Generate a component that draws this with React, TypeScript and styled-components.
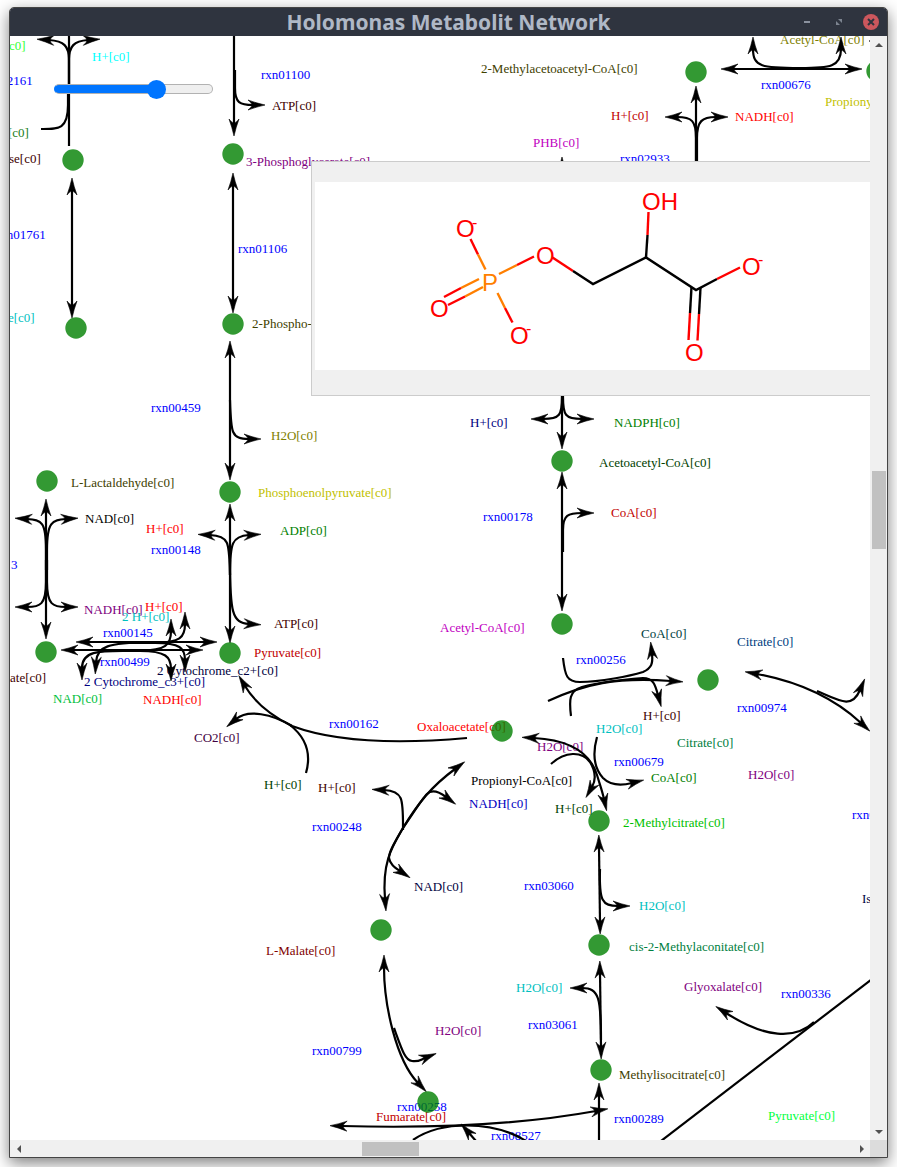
import React, { useState } from "react";
import styled, { createGlobalStyle } from "styled-components";

const GlobalStyle = createGlobalStyle`
  * { box-sizing: border-box; }
  body { margin: 0; background: #fff; overflow: hidden; }
`;

const Desktop = styled.div`
  height: 100vh;
  padding: 7px 9px 9px;
  display: flex;
`;

const Window = styled.main`
  flex: 1;
  min-width: 0;
  display: flex;
  flex-direction: column;
  border: 1px solid #454545;
  border-radius: 5px 5px 0 0;
  background: #f0f0f0;
  box-shadow: 0 5px 16px rgba(0, 0, 0, 0.5);
`;

const TitleBar = styled.header`
  height: 28px;
  flex: none;
  display: grid;
  grid-template-columns: 1fr auto 1fr;
  align-items: center;
  background: #2f343f;
  border-radius: 4px 4px 0 0;
`;

const Title = styled.h1`
  grid-column: 2;
  margin: 0;
  color: #afb8c6;
  font: bold 21px/28px "Noto Sans", "Open Sans", sans-serif;
  white-space: nowrap;
`;

const WindowControls = styled.div`
  display: flex;
  justify-content: flex-end;
  gap: 16px;
  padding-right: 8px;
`;

const ControlButton = styled.button<{ $close?: boolean }>`
  width: 16px;
  height: 16px;
  padding: 0;
  border: 0;
  border-radius: 50%;
  background: ${(p) => (p.$close ? "#cc575d" : "transparent")};
  display: grid;
  place-items: center;
`;

const Body = styled.div`
  flex: 1;
  min-height: 0;
  display: grid;
  grid-template: minmax(0, 1fr) 17px / minmax(0, 1fr) 17px;
`;

const Canvas = styled.section`
  position: relative;
  overflow: hidden;
  background: #fff;
`;

const Network = styled.svg`
  display: block;
  width: 100%;
  height: 100%;
  font: 13px "Liberation Serif", "Times New Roman", serif;
`;

const Zoom = styled.input.attrs({ type: "range" })<{ $fill: number }>`
  position: absolute;
  left: 44px;
  top: 43px;
  width: 159px;
  height: 20px;
  margin: 0;
  appearance: none;
  background: transparent;
  &::-webkit-slider-runnable-track {
    height: 10px;
    border: 1px solid #b2b2b2;
    border-left-color: #0075ff;
    border-radius: 5px;
    background: linear-gradient(
      to right,
      #0075ff ${(p) => p.$fill}%,
      #efefef ${(p) => p.$fill}%
    );
  }
  &::-webkit-slider-thumb {
    appearance: none;
    width: 19px;
    height: 19px;
    margin-top: -5px;
    border-radius: 50%;
    background: #0075ff;
  }
`;

const StructureCard = styled.aside`
  position: absolute;
  left: 301px;
  right: -1px;
  top: 125px;
  padding: 20px 0 25px 3px;
  border: 1px solid #ccc;
  background: #f0f0f0;
`;

const Molecule = styled.svg`
  display: block;
  width: 100%;
  height: 188px;
  background: #fff;
  font: 24px "Liberation Sans", Arial, sans-serif;
`;

const Scrollbar = styled.div<{ $vertical?: boolean }>`
  display: flex;
  flex-direction: ${(p) => (p.$vertical ? "column" : "row")};
  background: #f0f0f0;
`;

const ScrollButton = styled.button`
  flex: none;
  width: 17px;
  height: 17px;
  padding: 0;
  border: 0;
  background: transparent;
  display: grid;
  place-items: center;
`;

const ScrollTrack = styled.div<{ $before: number; $after: number }>`
  flex: 1;
  min-width: 0;
  min-height: 0;
  display: flex;
  flex-direction: inherit;
  &::before { content: ""; flex: ${(p) => p.$before}; }
  &::after { content: ""; flex: ${(p) => p.$after}; }
`;

const Thumb = styled.div<{ $length: number; $vertical?: boolean }>`
  flex: none;
  background: #c1c1c1;
  ${(p) =>
    p.$vertical
      ? `height: ${p.$length}px; margin: 0 1px 0 2px;`
      : `width: ${p.$length}px; margin: 2px 0 1px;`}
`;

const Corner = styled.div`
  background: #dcdcdc;
`;

type Edge = [d: string, heads: "none" | "end" | "both"];

const edges: Edge[] = [
  ["M69 30 V146", "none"],
  ["M69 84 V60 C69 46 64 41 49 40", "end"],
  ["M69 84 V60 C69 46 74 41 88 40", "end"],
  ["M41 129 C58 129 68 130 68 105 V90", "none"],
  ["M72 190 V306", "both"],
  ["M234 30 V124", "end"],
  ["M235 70 V88 C235 103 240 105 253 105", "end"],
  ["M233 185 V301", "both"],
  ["M230 353 V468", "both"],
  ["M230 400 C231 433 231 439 249 439", "end"],
  ["M230 516 V631", "both"],
  ["M230 575 C229 543 230 536 210 535", "end"],
  ["M230 575 C230 543 232 536 249 535", "end"],
  ["M230 560 C230 612 232 623 249 624", "end"],
  ["M46 511 V627", "both"],
  ["M46 570 V550 C46 522 42 520 27 519", "end"],
  ["M47 570 V550 C47 522 52 520 66 519", "end"],
  ["M46 560 V582 C46 605 40 607 27 607", "end"],
  ["M47 560 V582 C47 605 53 607 66 607", "end"],
  ["M88 642 H205", "both"],
  ["M150 642 C108 643 97 646 96 662", "end"],
  ["M130 643 H155 C180 642 185 638 185 624", "end"],
  ["M130 643 H155 C180 643 185 648 185 660", "end"],
  ["M73 650 H191", "both"],
  ["M135 651 C95 650 82 652 82 668", "end"],
  ["M115 651 H140 C166 650 171 645 171 631", "end"],
  ["M115 651 H140 C166 651 171 657 171 669", "end"],
  ["M467 738 C400 744 335 742 292 726 C272 716 255 703 245 686", "end"],
  ["M292 726 C272 714 248 709 236 719", "end"],
  ["M306 773 C312 752 304 736 290 725", "none"],
  ["M455 769 C432 786 418 803 403 828 C392 847 382 862 385 899", "both"],
  ["M403 830 C403 800 404 791 384 790", "end"],
  ["M403 828 C414 812 422 799 427 794 S438 791 446 797", "end"],
  ["M403 828 C393 845 389 852 389 858 C390 864 394 867 400 871", "end"],
  ["M384 967 C384 1005 396 1060 418 1083", "both"],
  ["M394 1028 C402 1050 405 1060 412 1061 S420 1060 425 1058", "end"],
  ["M342 1126 C450 1129 530 1123 596 1111", "both"],
  ["M413 1140 C440 1121 492 1120 526 1141", "none"],
  ["M476 1141 L469 1133", "end"],
  ["M599 1150 V1095", "end"],
  ["M600 973 L601 1047", "both"],
  ["M601 1040 C601 998 599 988 582 988", "end"],
  ["M599 847 L600 922", "both"],
  ["M600 869 C599 901 602 906 618 906", "end"],
  ["M548 701 C585 684 615 677 671 681", "end"],
  ["M563 658 C565 676 567 682 580 682 C600 682 630 676 643 672 C652 668 653 663 652 654", "end"],
  ["M571 716 C569 700 569 691 582 687 C600 682 630 679 643 678 C653 678 655 684 658 695", "end"],
  ["M757 674 C800 682 835 699 861 723", "both"],
  ["M817 691 C840 701 852 709 860 690", "end"],
  ["M534 738 C570 740 590 752 597 775 C600 785 602 790 604 799", "both"],
  ["M597 737 C592 755 594 768 603 778 C610 785 620 786 632 783", "end"],
  ["M551 764 C565 751 582 751 590 762 C596 772 596 780 592 787", "end"],
  ["M562 380 V437", "end"],
  ["M562 380 V397 C562 415 560 419 543 419", "end"],
  ["M563 380 V397 C563 415 565 419 582 419", "end"],
  ["M562 484 V599", "both"],
  ["M563 552 V530 C563 515 568 513 582 513", "end"],
  ["M562 190 V169", "end"],
  ["M696 170 V98", "end"],
  ["M696 170 V138 C696 121 692 117 677 117", "end"],
  ["M697 170 V138 C697 121 702 117 716 117", "end"],
  ["M733 69 H850", "both"],
  ["M800 68 C762 68 753 67 753 49", "end"],
  ["M800 68 C830 68 841 67 841 49", "end"],
  ["M890 41 H881", "end"],
  ["M872 979 L661 1141", "none"],
  ["M814 1022 C795 1040 765 1038 726 1013", "end"],
];

const nodes: [x: number, y: number][] = [
  [73, 160], [233, 154], [76, 328], [233, 324], [230, 492], [47, 481],
  [46, 652], [230, 653], [502, 731], [381, 930], [428, 1102], [601, 1070],
  [599, 945], [599, 821], [562, 461], [562, 624], [708, 680], [696, 72],
  [877, 71],
];

const BLUE = "#0000ff";

const labels: [x: number, y: number, text: string, color: string][] = [
  [9, 50, "c0]", "#33ff33"],
  [92, 61, "H+[c0]", "#00ffff"],
  [-17, 85, "rxn02161", BLUE],
  [8, 137, "[c0]", "#1a8019"],
  [9, 163, "se[c0]", "#400000"],
  [-4, 239, "rxn01761", BLUE],
  [8, 322, "e[c0]", "#00bfbf"],
  [261, 79, "rxn01100", BLUE],
  [272, 110, "ATP[c0]", "#400000"],
  [246, 166, "3-Phosphoglycerate[c0]", "#800080"],
  [238, 253, "rxn01106", BLUE],
  [252, 328, "2-Phospho-D-glycerate[c0]", "#404000"],
  [151, 412, "rxn00459", BLUE],
  [271, 440, "H2O[c0]", "#808000"],
  [71, 487, "L-Lactaldehyde[c0]", "#404000"],
  [258, 497, "Phosphoenolpyruvate[c0]", "#bfbf00"],
  [85, 523, "NAD[c0]", "#000000"],
  [146, 533, "H+[c0]", "#ff0000"],
  [151, 554, "rxn00148", BLUE],
  [280, 535, "ADP[c0]", "#008000"],
  [11, 569, "3", BLUE],
  [84, 614, "NADH[c0]", "#800080"],
  [145, 611, "H+[c0]", "#ff0000"],
  [122, 621, "2 H+[c0]", "#00bfbf"],
  [103, 637, "rxn00145", BLUE],
  [100, 666, "rxn00499", BLUE],
  [157, 675, "2 Cytochrome_c2+[c0]", "#000040"],
  [84, 686, "2 Cytochrome_c3+[c0]", "#000080"],
  [10, 682, "ate[c0]", "#400000"],
  [53, 703, "NAD[c0]", "#00bf40"],
  [143, 704, "NADH[c0]", "#ff0000"],
  [274, 628, "ATP[c0]", "#400000"],
  [254, 657, "Pyruvate[c0]", "#bf0000"],
  [329, 728, "rxn00162", BLUE],
  [194, 742, "CO2[c0]", "#400040"],
  [264, 789, "H+[c0]", "#004000"],
  [318, 792, "H+[c0]", "#400000"],
  [312, 831, "rxn00248", BLUE],
  [417, 731, "Oxaloacetate[c0]", "#ff0000"],
  [471, 785, "Propionyl-CoA[c0]", "#000000"],
  [469, 808, "NADH[c0]", "#0000bf"],
  [414, 891, "NAD[c0]", "#000040"],
  [266, 955, "L-Malate[c0]", "#800000"],
  [435, 1035, "H2O[c0]", "#800080"],
  [312, 1055, "rxn00799", BLUE],
  [397, 1111, "rxn00258", BLUE],
  [376, 1121, "Fumarate[c0]", "#bf0000"],
  [491, 1140, "rxn08527", BLUE],
  [481, 73, "2-Methylacetoacetyl-CoA[c0]", "#404000"],
  [611, 120, "H+[c0]", "#bf0000"],
  [735, 121, "NADH[c0]", "#ff0000"],
  [620, 163, "rxn02933", BLUE],
  [533, 147, "PHB[c0]", "#bf00bf"],
  [780, 44, "Acetyl-CoA[c0]", "#808000"],
  [761, 89, "rxn00676", BLUE],
  [825, 106, "Propionyl-CoA[c0]", "#bfbf00"],
  [470, 427, "H+[c0]", "#000080"],
  [614, 427, "NADPH[c0]", "#008000"],
  [599, 467, "Acetoacetyl-CoA[c0]", "#004000"],
  [611, 517, "CoA[c0]", "#bf0000"],
  [483, 521, "rxn00178", BLUE],
  [440, 632, "Acetyl-CoA[c0]", "#bf00bf"],
  [641, 638, "CoA[c0]", "#004040"],
  [576, 664, "rxn00256", BLUE],
  [737, 646, "Citrate[c0]", "#004080"],
  [737, 712, "rxn00974", BLUE],
  [643, 720, "H+[c0]", "#400000"],
  [596, 733, "H2O[c0]", "#00bfbf"],
  [677, 747, "Citrate[c0]", "#008040"],
  [537, 751, "H2O[c0]", "#800080"],
  [614, 766, "rxn00679", BLUE],
  [651, 782, "CoA[c0]", "#008000"],
  [748, 779, "H2O[c0]", "#800080"],
  [555, 813, "H+[c0]", "#004000"],
  [623, 827, "2-Methylcitrate[c0]", "#00bf00"],
  [852, 819, "rxn01388", BLUE],
  [862, 903, "Isocitrate[c0]", "#000040"],
  [524, 890, "rxn03060", BLUE],
  [639, 910, "H2O[c0]", "#00bfbf"],
  [629, 951, "cis-2-Methylaconitate[c0]", "#008040"],
  [516, 992, "H2O[c0]", "#00bfbf"],
  [528, 1029, "rxn03061", BLUE],
  [684, 991, "Glyoxalate[c0]", "#800080"],
  [781, 998, "rxn00336", BLUE],
  [619, 1079, "Methylisocitrate[c0]", "#404000"],
  [614, 1123, "rxn00289", BLUE],
  [768, 1120, "Pyruvate[c0]", "#00ff40"],
];

function MetabolicNetwork() {
  return (
    <Network role="img" aria-label="Metabolic network">
      <defs>
        <marker
          id="head"
          viewBox="-6 -6 19 12"
          markerWidth="19"
          markerHeight="12"
          refX="0"
          refY="0"
          markerUnits="userSpaceOnUse"
          orient="auto-start-reverse"
        >
          <path d="M12 0 Q3 -2 -5 -5 Q-1 -2 -1 0 Q-1 2 -5 5 Q3 2 12 0Z" stroke="#000" strokeWidth="0.6" />
        </marker>
      </defs>
      <g transform="translate(-10 -36)">
        {labels.map(([x, y, text, color]) => (
          <text key={`${x}-${y}`} x={x} y={y} fill={color}>
            {text}
          </text>
        ))}
        <g fill="none" stroke="#000" strokeWidth="2.2">
          {edges.map(([d, heads]) => (
            <path
              key={d}
              d={d}
              markerEnd={heads !== "none" ? "url(#head)" : undefined}
              markerStart={heads === "both" ? "url(#head)" : undefined}
            />
          ))}
        </g>
        <g fill="#008000" fillOpacity="0.8">
          {nodes.map(([cx, cy]) => (
            <circle key={`${cx}-${cy}`} cx={cx} cy={cy} r="10.7" />
          ))}
        </g>
      </g>
    </Network>
  );
}

const RED = "#ff0000";
const ORANGE = "#ff7f00";

const bonds: [d: string, color: string][] = [
  ["M470.500 239 L478 254.500", RED],
  ["M478 254.500 L485.500 269.500", ORANGE],
  ["M499 274 L517 265", ORANGE],
  ["M517 265 L534 256.500", RED],
  ["M552.500 257.500 L573 271", RED],
  ["M573 271 L593 284 L646 257.500 L696 290 L717 279", "#000"],
  ["M717 279 L740 267.500", RED],
  ["M479 279 L461 288", ORANGE],
  ["M461 288 L444 297", RED],
  ["M483 287 L465 296.500", ORANGE],
  ["M465 296.500 L448 305", RED],
  ["M497.500 293 L505 308", ORANGE],
  ["M505 308 L512.500 322.500", RED],
  ["M646 257.500 L647.500 235", "#000"],
  ["M647.500 235 L648.500 212", RED],
  ["M691.500 287 L690 313", "#000"],
  ["M690 313 L688.500 340", RED],
  ["M700.500 288 L699 314", "#000"],
  ["M699 314 L697.500 340.500", RED],
];

const atoms: [x: number, y: number, text: string, color: string][] = [
  [456, 237, "O", RED],
  [472, 228, "-", RED],
  [536, 264, "O", RED],
  [482, 291, "P", ORANGE],
  [430, 317, "O", RED],
  [510, 344, "O", RED],
  [526, 334, "-", RED],
  [642, 210, "OH", RED],
  [742, 275, "O", RED],
  [758, 265, "-", RED],
  [685, 361, "O", RED],
];

function MoleculeDrawing() {
  return (
    <Molecule role="img" aria-label="3-Phosphoglycerate structure">
      <g transform="translate(-315 -182)">
        <g fill="none" strokeWidth="2.4">
          {bonds.map(([d, color]) => (
            <path key={d} d={d} stroke={color} />
          ))}
        </g>
        {atoms.map(([x, y, text, color]) => (
          <text key={`${x}-${y}`} x={x} y={y} fill={color} fontSize={text === "-" ? 16 : 24}>
            {text}
          </text>
        ))}
      </g>
    </Molecule>
  );
}

function Arrow({ turn }: { turn: number }) {
  return (
    <svg width="8" height="8" viewBox="0 0 8 8" aria-hidden="true">
      <path d="M0 6 L4 2 L8 6Z" fill="#505050" transform={`rotate(${turn} 4 4)`} />
    </svg>
  );
}

export default function App() {
  const [zoom, setZoom] = useState(67);
  return (
    <>
      <GlobalStyle />
      <Desktop>
        <Window>
          <TitleBar>
            <Title>Holomonas Metabolit Network</Title>
            <WindowControls>
              <ControlButton aria-label="Minimize">
                <svg width="16" height="16" viewBox="0 0 16 16">
                  <path d="M5 8 H11" stroke="#8b929f" strokeWidth="2" />
                </svg>
              </ControlButton>
              <ControlButton aria-label="Maximize">
                <svg width="16" height="16" viewBox="0 0 16 16" fill="#7d8490">
                  <path d="M7 5 H11 V9Z M5 7 V11 H9Z" />
                </svg>
              </ControlButton>
              <ControlButton aria-label="Close" $close>
                <svg width="14" height="14" viewBox="0 0 14 14">
                  <path d="M4 4 L10 10 M10 4 L4 10" stroke="#2f343f" strokeWidth="2" />
                </svg>
              </ControlButton>
            </WindowControls>
          </TitleBar>
          <Body>
            <Canvas>
              <MetabolicNetwork />
              <Zoom
                aria-label="Zoom"
                min={0}
                max={100}
                value={zoom}
                $fill={zoom}
                onChange={(e) => setZoom(Number(e.target.value))}
              />
              <StructureCard>
                <MoleculeDrawing />
              </StructureCard>
            </Canvas>
            <Scrollbar $vertical>
              <ScrollButton aria-label="Scroll up"><Arrow turn={0} /></ScrollButton>
              <ScrollTrack $before={418} $after={574}>
                <Thumb $length={78} $vertical />
              </ScrollTrack>
              <ScrollButton aria-label="Scroll down"><Arrow turn={180} /></ScrollButton>
            </Scrollbar>
            <Scrollbar>
              <ScrollButton aria-label="Scroll left"><Arrow turn={270} /></ScrollButton>
              <ScrollTrack $before={335} $after={434}>
                <Thumb $length={57} />
              </ScrollTrack>
              <ScrollButton aria-label="Scroll right"><Arrow turn={90} /></ScrollButton>
            </Scrollbar>
            <Corner />
          </Body>
        </Window>
      </Desktop>
    </>
  );
}
